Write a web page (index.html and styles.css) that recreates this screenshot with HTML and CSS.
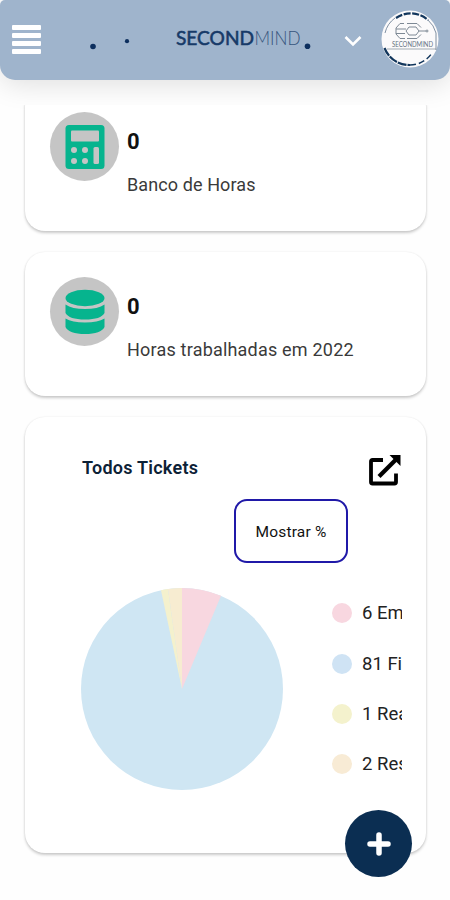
FILE: index.html
```html
<!DOCTYPE html>
<html lang="pt-BR">
<head>
<meta charset="utf-8">
<meta name="viewport" content="width=device-width, initial-scale=1">
<title>SecondMind</title>
<link rel="stylesheet" href="styles.css">
</head>
<body>
<header class="topbar">
  <button class="menu" aria-label="Menu"><i></i><i></i><i></i><i></i></button>
  <svg class="brand" width="236" height="30" viewBox="0 0 236 30">
    <g fill="#0d2f5e"><circle cx="11" cy="22.5" r="2.8"/><circle cx="45" cy="17.2" r="2.1"/><circle cx="225.5" cy="22.3" r="2.8"/></g>
    <text class="brand-strong" x="94" y="20.5" textLength="78" lengthAdjust="spacingAndGlyphs">SECOND</text>
    <text class="brand-light" x="172.5" y="20.5" textLength="46" lengthAdjust="spacingAndGlyphs">MIND</text>
  </svg>
  <svg class="chevron" width="20" height="14" viewBox="0 0 20 14"><path d="M2.5 3l7.5 7.5L17.5 3" fill="none" stroke="#fff" stroke-width="2.6"/></svg>
  <svg class="avatar" width="58" height="58" viewBox="0 0 58 58">
    <circle cx="29" cy="29" r="28.5" fill="#fbfafb"/>
    <g fill="none" stroke="#12365c" stroke-width="2.2">
      <path d="M15 8A26 26 0 0 1 47 10" stroke-dasharray="7 1.5"/>
      <path d="M3.5 38A26.5 26.5 0 0 0 29 55" stroke-dasharray="9 1"/>
      <path d="M29 55A26.5 26.5 0 0 0 51 43" stroke-width="1.5" stroke-dasharray="6 3"/>
    </g>
    <path d="M14 8A26 26 0 0 0 4 23M47 10A26 26 0 0 1 55 23V40" fill="none" stroke="#61758b" stroke-width=".8"/>
    <g fill="none" stroke="#7e8995" stroke-width="1">
      <path d="M23 13.500h-4l-4 4.500v6l4 4.500h5M26 13.500h10l4 4M26 28.500h10l4-4M15 19h10M15 23.500h9M28 17h7l3 4h7M28 25h7l3-4M28 17l-3 4 3 4"/>
      <circle cx="46" cy="21" r="1"/>
      <path d="M6 39h49" stroke-width=".7"/>
    </g>
    <text class="avatar-text" x="11" y="37" textLength="41" lengthAdjust="spacingAndGlyphs">SECONDMIND</text>
  </svg>
</header>
<main class="content">
  <section class="card stat stat-first">
    <div class="stat-icon">
      <svg width="40" height="46" viewBox="0 0 40 46">
        <rect x=".5" y="1" width="39" height="44" rx="3.500" fill="#06b48e"/>
        <g fill="#c5c5c5"><rect x="6" y="6.500" width="28" height="11" rx="1"/><circle cx="9" cy="26" r="3"/><circle cx="20" cy="26" r="3"/><circle cx="9" cy="37" r="3"/><circle cx="20" cy="37" r="3"/><rect x="28.500" y="23" width="5.500" height="17" rx="1.500"/></g>
      </svg>
    </div>
    <div class="stat-text"><strong>0</strong><span class="short">Banco de Horas</span></div>
  </section>
  <section class="card stat">
    <div class="stat-icon">
      <svg width="40" height="46" viewBox="0 0 40 46"><g fill="#06b48e"><ellipse cx="20" cy="9" rx="19.5" ry="8.3"/><path d="M.5 15.5Q7 20 20 20t19.500-4.500V24Q36 30.500 20 30.500T.5 24zM.5 29.500Q7 33.500 20 33.500t19.500-4V38Q36 45 20 45T.5 38z"/></g></svg>
    </div>
    <div class="stat-text"><strong>0</strong><span>Horas trabalhadas em 2022</span></div>
  </section>
  <section class="card tickets">
    <div class="tickets-head">
      <h2>Todos Tickets</h2>
      <svg width="34" height="34" viewBox="0 0 34 34"><path d="M15 6H4.500Q3 6 3 7.500V28q0 1.500 1.500 1.500h22Q28 29.500 28 28v-8.500" fill="none" stroke="#000" stroke-width="3.800"/><path d="M11 22.500L28 5.500" stroke="#000" stroke-width="4.200"/><path d="M21.500 1h11v11z"/></svg>
    </div>
    <button class="toggle">Mostrar %</button>
    <div class="chart">
      <svg class="pie" width="202" height="202" viewBox="-101 -101 202 202">
        <circle r="101" fill="#cfe6f3"/>
        <path d="M0 0V-101A101 101 0 0 1 39 -93.17z" fill="#f8d7e0"/>
        <path d="M0 0L-21 -98.79A101 101 0 0 1 -14 -100.02z" fill="#f4f1cd"/>
        <path d="M0 0L-14 -100.02A101 101 0 0 1 0 -101z" fill="#f7ecd1"/>
      </svg>
      <ul class="legend">
        <li><i class="dot pink"></i>6 Em</li>
        <li><i class="dot blue"></i>81 Fi</li>
        <li><i class="dot yellow"></i>1 Rea</li>
        <li><i class="dot orange"></i>2 Res</li>
      </ul>
    </div>
  </section>
</main>
<button class="fab" aria-label="Adicionar"><svg width="24" height="24" viewBox="0 0 24 24"><path d="M12 3v18M3 12h18" stroke="#fff" stroke-width="5.5" stroke-linecap="round"/></svg></button>
</body>
</html>
```
FILE: styles.css
```css
* { box-sizing: border-box; }
body {
  margin: 0;
  height: 900px;
  overflow: hidden;
  background: #fefefe;
  color: #111;
  font-family: Roboto, "Liberation Sans", sans-serif;
}
button { font: inherit; border: 0; padding: 0; background: none; }
.topbar {
  display: flex;
  align-items: center;
  height: 80px;
  padding: 0 11px 2px 12px;
  background: #9fb4cc;
  border-radius: 5px 5px 15px 15px;
  box-shadow: 0 4px 28px rgba(0, 0, 0, .13);
}
.menu { display: grid; gap: 3px; width: 29px; }
.menu i { height: 5px; background: #fff; border-radius: 1px; }
.brand { margin-left: 41px; }
.brand-strong, .brand-light { font-family: Lato, sans-serif; font-size: 19px; fill: #173a68; }
.brand-strong { font-weight: 400; stroke: #173a68; stroke-width: .55px; }
.brand-light { font-weight: 300; fill: #36557c; }
.chevron { margin: 4px 0 0 25px; }
.avatar { margin-left: 18px; flex: none; }
.avatar-text { font-family: Lato, sans-serif; font-size: 7px; fill: #64717f; }
.content {
  display: flex;
  flex-direction: column;
  gap: 21px;
  height: 795px;
  margin-top: 25px;
  padding: 0 24px 0 25px;
  overflow: hidden;
}
.card {
  flex: none;
  background: #fff;
  border-radius: 20px;
  box-shadow: 0 2px 3px rgba(0, 0, 0, .2), 0 0 2px rgba(0, 0, 0, .08);
}
.stat { display: flex; gap: 8px; height: 144px; padding: 25px; }
.stat-first { margin-top: -18px; }
.stat-icon {
  display: grid;
  place-items: center;
  width: 69px;
  height: 69px;
  border-radius: 50%;
  background: #c5c5c5;
}
.stat-text { display: flex; flex-direction: column; padding-top: 16px; }
.stat-text strong { font-size: 22px; line-height: 28px; }
.stat-text span { margin-top: 17px; font-size: 18px; line-height: 24px; letter-spacing: .2px; color: #3a3a3a; }
.stat-text .short { letter-spacing: .1px; }
.tickets { display: flex; flex-direction: column; height: 436px; padding: 37px 24px 0; }
.tickets-head { display: flex; justify-content: space-between; height: 45px; padding-left: 33px; }
.tickets-head h2 { margin: 3px 0 0; font-size: 18px; line-height: 22px; font-weight: 600; letter-spacing: .25px; color: #0c2136; }
.toggle {
  align-self: flex-end;
  width: 114px;
  height: 64px;
  margin-right: 54px;
  padding-top: 2px;
  border: 2px solid #2019a8;
  border-radius: 13px;
  font-size: 15.5px;
  letter-spacing: .2px;
  color: #111;
}
.chart { display: flex; justify-content: space-between; padding: 25px 0 0 32px; }
.legend { width: 70px; margin: 0; padding: 0; list-style: none; overflow: hidden; }
.legend li { display: flex; align-items: center; gap: 10px; height: 50.4px; white-space: nowrap; font-size: 18.5px; color: #222; }
.dot { flex: none; width: 20px; height: 20px; border-radius: 50%; }
.pink { background: #f8d7e0; }
.blue { background: #cfe3f4; }
.yellow { background: #f4f2cd; }
.orange { background: #f8ebd5; }
.fab {
  position: absolute;
  left: 345px;
  top: 810px;
  display: grid;
  place-items: center;
  width: 67px;
  height: 67px;
  border-radius: 50%;
  background: #0b2e52;
}
```
